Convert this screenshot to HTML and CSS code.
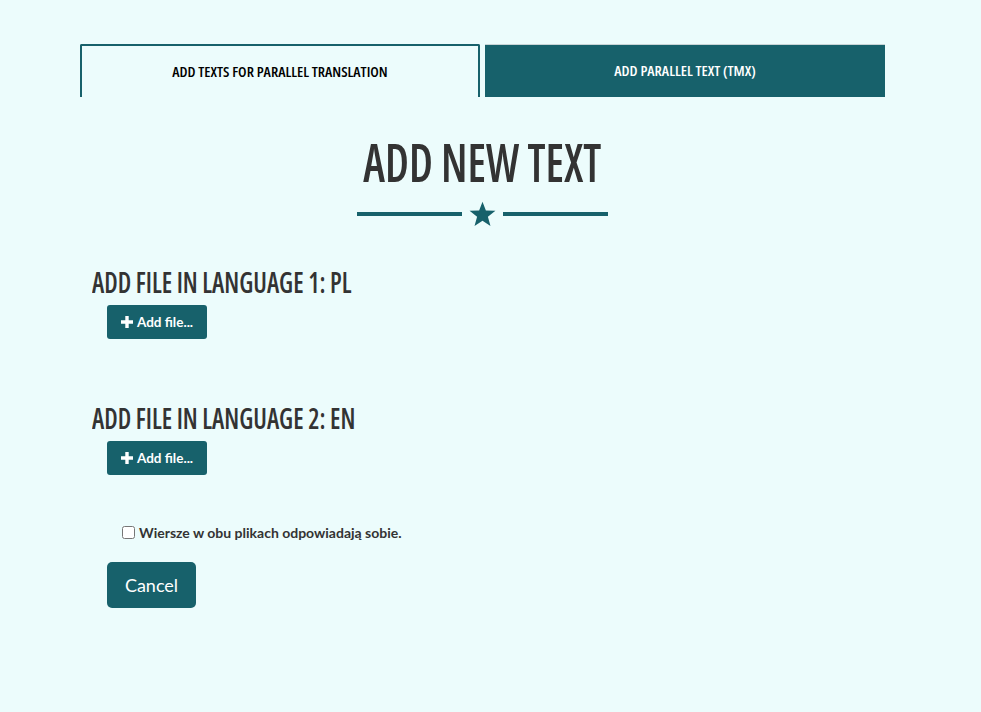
FILE: index.html
```html
<!DOCTYPE html>
<html>
<head>
<meta charset="utf-8">
<link rel="stylesheet" href="styles.css">
</head>
<body>
<div class="page">
  <div class="tabs">
    <div class="tab tab-active"><span class="cond cond-tab">ADD TEXTS FOR PARALLEL TRANSLATION</span></div>
    <div class="tab tab-other"><span class="cond cond-tab">ADD PARALLEL TEXT (TMX)</span></div>
  </div>
  <h1 class="title"><span class="cond cond-title">ADD NEW TEXT</span></h1>
  <div class="divider">
    <span class="line"></span>
    <svg class="star" width="27" height="26" viewBox="0 0 24 23"><polygon points="12,0.5 15,8.3 23.5,8.6 16.8,13.9 19.1,22.2 12,17.4 4.9,22.2 7.2,13.9 0.5,8.6 9,8.3" fill="#17616b"/></svg>
    <span class="line"></span>
  </div>
  <div class="section">
    <h3 class="lang"><span class="cond cond-lang">ADD FILE IN LANGUAGE 1: PL</span></h3>
    <button class="btn-add"><svg width="12" height="12" viewBox="0 0 12 12"><path d="M4.3 0h3.4v4.3H12v3.4H7.7V12H4.3V7.7H0V4.3h4.3z" fill="#fff"/></svg>Add file...</button>
  </div>
  <div class="section section2">
    <h3 class="lang"><span class="cond cond-lang">ADD FILE IN LANGUAGE 2: EN</span></h3>
    <button class="btn-add"><svg width="12" height="12" viewBox="0 0 12 12"><path d="M4.3 0h3.4v4.3H12v3.4H7.7V12H4.3V7.7H0V4.3h4.3z" fill="#fff"/></svg>Add file...</button>
  </div>
  <label class="check"><input type="checkbox"><span>Wiersze w obu plikach odpowiadają sobie.</span></label>
  <button class="btn-cancel">Cancel</button>
</div>
</body>
</html>
```
FILE: styles.css
```css
html, body {
  margin: 0;
  padding: 0;
  background: #ecfcfc;
  height: 100%;
}
body {
  font-family: Lato, "Open Sans", sans-serif;
  color: #333;
}
.page {
  width: 805px;
  padding: 44px 0 0 80px;
}
.cond {
  display: inline-block;
  font-family: "Open Sans", "Roboto Condensed", sans-serif;
  font-stretch: 75%;
  font-weight: 600;
  white-space: nowrap;
}
.cond-tab {
  font-size: 15px;
  font-weight: 550;
  transform-origin: center;
}
.cond-title {
  font-size: 52px;
  transform: scaleX(0.86);
  transform-origin: center;
}
.cond-lang {
  font-size: 28px;
  transform: scaleX(0.9);
  transform-origin: left center;
}
.tabs {
  display: flex;
  gap: 5px;
}
.tab {
  width: 400px;
  height: 53px;
  box-sizing: border-box;
  display: flex;
  align-items: center;
  justify-content: center;
}
.tab-active {
  border: 2px solid #17616b;
  border-bottom: none;
  border-radius: 2px 2px 0 0;
  color: #000;
  padding-bottom: 2px;
}
.tab-other {
  background: #17616b;
  color: #fff;
  border-top: 1px solid #c8d4d6;
  padding-bottom: 3px;
}
.title {
  margin: 37px 0 0;
  text-align: center;
  font-size: 52px;
  line-height: 56px;
  height: 56px;
  color: #333;
}
.divider {
  display: flex;
  justify-content: center;
  align-items: center;
  gap: 7px;
  margin-top: 11px;
  height: 26px;
}
.line {
  width: 105px;
  height: 4px;
  background: #17616b;
}
.star {
  display: block;
}
.section {
  padding-left: 12px;
  margin-top: 39px;
}
.section2 {
  margin-top: 63px;
}
.lang {
  margin: 0 0 7px;
  font-size: 28px;
  line-height: 32px;
  height: 32px;
  color: #333;
}
.btn-add {
  margin-left: 15px;
  width: 100px;
  height: 34px;
  border: none;
  border-radius: 3px;
  background: #17616b;
  color: #fff;
  font-family: Lato, sans-serif;
  font-weight: 700;
  font-size: 13.5px;
  display: flex;
  align-items: center;
  justify-content: center;
  gap: 4px;
  padding: 0;
}
.check {
  display: flex;
  align-items: center;
  height: 16px;
  margin: 49px 0 0 42px;
  font-family: Lato, sans-serif;
  font-weight: 700;
  font-size: 14px;
  color: #333;
}
.check input {
  margin: 0 4px 0 0;
  width: 13px;
  height: 13px;
}
.btn-cancel {
  display: block;
  margin: 22px 0 0 27px;
  width: 89px;
  height: 46px;
  border: none;
  border-radius: 5px;
  background: #17616b;
  color: #fff;
  font-family: Lato, sans-serif;
  font-size: 18px;
  padding: 0;
}
```
